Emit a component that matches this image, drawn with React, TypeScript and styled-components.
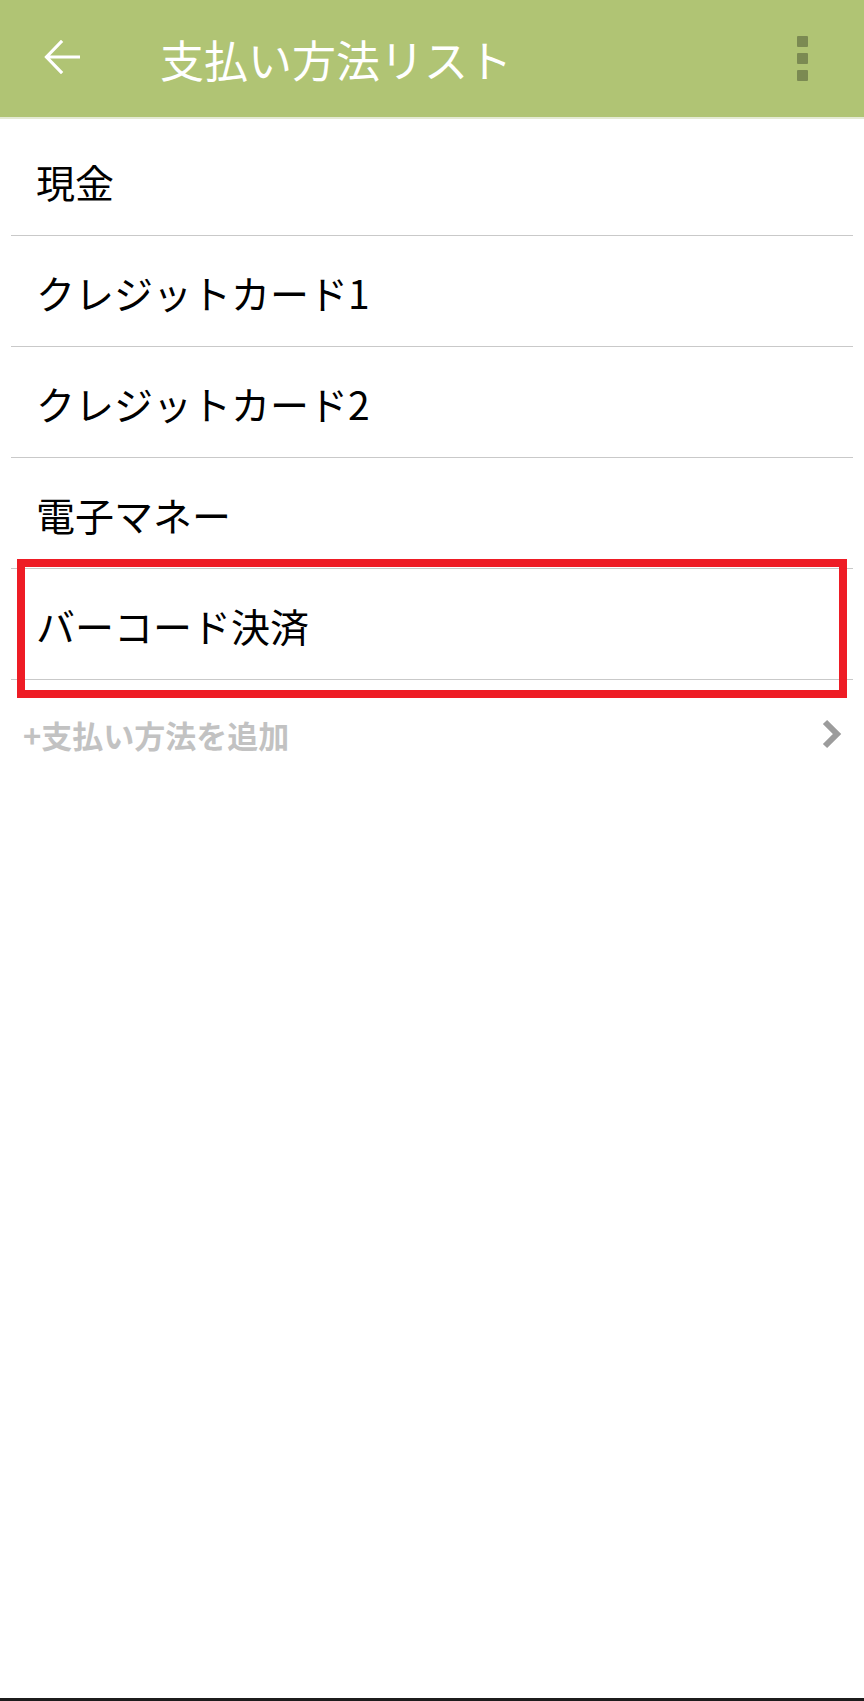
import styled, { createGlobalStyle } from 'styled-components';

const GlobalStyle = createGlobalStyle`
  html, body {
    margin: 0;
    padding: 0;
    background: #ffffff;
  }
  body {
    font-family: "Noto Sans CJK JP", "Noto Sans", sans-serif;
  }
`;

const Screen = styled.div`
  width: 864px;
  min-height: 1701px;
  box-sizing: border-box;
  display: flex;
  flex-direction: column;
  background: #ffffff;
  border-bottom: 3px solid #1c1c1c;
`;

const AppBar = styled.header`
  height: 117px;
  background: #b0c474;
  border-bottom: 2px solid #e4ead3;
  display: flex;
  align-items: center;
  padding: 0 56px 0 44px;
`;

const BackButton = styled.div`
  width: 36px;
  height: 34px;
  display: flex;
  margin-top: -3px;
`;

const Title = styled.h1`
  flex: 1;
  margin: 0 0 0 80px;
  color: #ffffff;
  font-size: 44px;
  font-weight: 400;
  line-height: 1;
  letter-spacing: 0;
`;

const Kebab = styled.div`
  display: flex;
  flex-direction: column;
  gap: 6px;
  margin-top: -1px;
`;

const Dot = styled.span`
  width: 11px;
  height: 11px;
  border-radius: 1px;
  background: #7b8a52;
`;

const List = styled.ul`
  list-style: none;
  margin: 0;
  padding: 6px 11px 0;
`;

const Row = styled.li`
  position: relative;
  height: 111px;
  box-sizing: border-box;
  border-bottom: 1px solid #c9c9c9;
  display: flex;
  align-items: center;
  padding: 2px 0 0 25px;
  font-size: 39px;
  color: #000000;
  line-height: 1;
`;

const Highlight = styled.span`
  position: absolute;
  left: 6px;
  right: 6px;
  top: -10px;
  bottom: -19px;
  border: 8px solid #ee1c25;
  pointer-events: none;
`;

const AddRow = styled.div`
  display: flex;
  align-items: center;
  justify-content: space-between;
  height: 86px;
  padding: 0 22px 0 23px;
  margin-top: 11px;
`;

const AddLabel = styled.span`
  font-size: 31px;
  font-weight: 700;
  color: #c2c2c2;
  line-height: 1;
`;

const methods = ['現金', 'クレジットカード1', 'クレジットカード2', '電子マネー', 'バーコード決済'];

export default function App() {
  return (
    <>
      <GlobalStyle />
      <Screen>
        <AppBar>
          <BackButton>
            <svg width="36" height="34" viewBox="0 0 36 34" fill="none">
              <path d="M35 17H3M17 2L2.5 17L17 32" stroke="#ffffff" strokeWidth="3.2" strokeLinecap="square" />
            </svg>
          </BackButton>
          <Title>支払い方法リスト</Title>
          <Kebab>
            <Dot />
            <Dot />
            <Dot />
          </Kebab>
        </AppBar>
        <List>
          {methods.map((m, i) => (
            <Row key={m}>
              {m}
              {i === methods.length - 1 && <Highlight />}
            </Row>
          ))}
        </List>
        <AddRow>
          <AddLabel>+支払い方法を追加</AddLabel>
          <svg width="21" height="30" viewBox="0 0 21 30" fill="none">
            <path d="M4 3L16 15L4 27" stroke="#9c9c9c" strokeWidth="6" strokeLinejoin="miter" />
          </svg>
        </AddRow>
      </Screen>
    </>
  );
}
